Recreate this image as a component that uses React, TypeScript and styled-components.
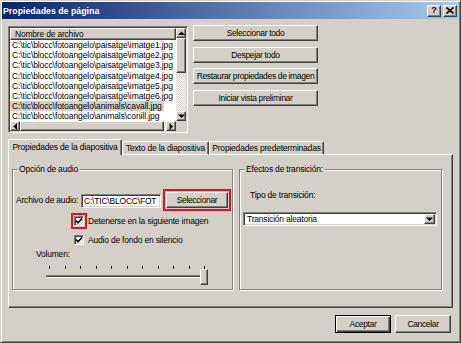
import React from "react";
import styled, { createGlobalStyle, css } from "styled-components";

const GlobalStyle = createGlobalStyle`
  html, body {
    margin: 0;
    padding: 0;
    background: #d4d0c8;
  }
  body {
    font-family: "Liberation Sans", Arial, sans-serif;
    font-size: 8.5px;
    letter-spacing: -0.2px;
    color: #000;
  }
  * {
    box-sizing: border-box;
  }
`;

const raised = css`
  border: 1px solid;
  border-color: #fff #404040 #404040 #fff;
  box-shadow: inset -1px -1px #808080;
  background: #d4d0c8;
`;

const sunken = css`
  border: 1px solid;
  border-color: #808080 #fff #fff #808080;
  box-shadow: inset 1px 1px #404040, inset -1px -1px #d4d0c8;
`;

const Window = styled.div`
  width: 461px;
  height: 343px;
  padding: 1px;
  border: 1px solid;
  border-color: #d4d0c8 #404040 #404040 #d4d0c8;
  box-shadow: inset 1px 1px #fff, inset -1px -1px #808080;
  background: #d4d0c8;
  display: flex;
  flex-direction: column;
`;

const TitleBar = styled.div`
  height: 17px;
  display: flex;
  align-items: center;
  justify-content: space-between;
  padding: 0 2px 0 1px;
  background: linear-gradient(to right, #0a246a, #a6caf0);
`;

const TitleText = styled.span`
  color: #fff;
  font-weight: bold;
  font-size: 8.8px;
  letter-spacing: 0;
`;

const CaptionButtons = styled.div`
  display: flex;
  gap: 2px;
`;

const CaptionButton = styled.div`
  ${raised}
  width: 14px;
  height: 12px;
  display: flex;
  align-items: center;
  justify-content: center;
  font-weight: bold;
  font-size: 9px;
  line-height: 1;
`;

const Body = styled.div`
  padding: 7px 6px 0 6px;
  display: flex;
  flex-direction: column;
`;

const TopRow = styled.div`
  display: flex;
  gap: 5px;
  height: 107px;
`;

const ListBox = styled.div`
  ${sunken}
  padding: 1px;
  width: 180px;
  height: 107px;
  background: #fff;
  display: grid;
  grid-template-columns: 1fr 10px;
  grid-template-rows: 1fr 10px;
  overflow: hidden;
`;

const ListContent = styled.div`
  overflow: hidden;
  display: flex;
  flex-direction: column;
`;

const ListHeader = styled.div`
  ${raised}
  height: 12px;
  flex: none;
  line-height: 10px;
  padding-left: 4px;
  white-space: nowrap;
`;

const ListRow = styled.div<{ $selected?: boolean }>`
  height: 10.2px;
  flex: none;
  line-height: 10.2px;
  padding: 0 2px;
  width: fit-content;
  white-space: nowrap;
  letter-spacing: -0.08px;
  background: ${(p) => (p.$selected ? "#d4d0c8" : "transparent")};
`;

const dither = css`
  background: repeating-conic-gradient(#fff 0 25%, #d4d0c8 0 50%) 0 0 / 2px 2px;
`;

const VScroll = styled.div`
  display: flex;
  flex-direction: column;
  ${dither}
`;

const HScroll = styled.div`
  display: flex;
  ${dither}
`;

const ScrollArrow = styled.div`
  ${raised}
  width: 10px;
  height: 10px;
  flex: none;
  display: flex;
  align-items: center;
  justify-content: center;
`;

const ScrollThumb = styled.div<{ $size: number; $horizontal?: boolean }>`
  ${raised}
  flex: none;
  ${(p) => (p.$horizontal ? `width: ${p.$size}px;` : `height: ${p.$size}px;`)}
`;

const Spacer = styled.div`
  flex: 1;
`;

const Corner = styled.div`
  background: #d4d0c8;
`;

const ButtonColumn = styled.div`
  display: flex;
  flex-direction: column;
  gap: 5.67px;
  margin-top: -1px;
`;

const Button = styled.div<{ $width?: number; $height?: number; $default?: boolean }>`
  ${raised}
  width: ${(p) => p.$width ?? 125}px;
  height: ${(p) => p.$height ?? 16}px;
  display: flex;
  align-items: center;
  justify-content: center;
  white-space: nowrap;
  letter-spacing: -0.35px;
  ${(p) =>
    p.$default &&
    css`
      border: 1px solid #000;
      box-shadow: inset 1px 1px #fff, inset -1px -1px #404040,
        inset -2px -2px #808080;
    `}
`;

const TabStrip = styled.div`
  margin-top: 6px;
  height: 16px;
  display: flex;
  align-items: flex-end;
  position: relative;
  z-index: 1;
  margin-bottom: -1px;
`;

const Tab = styled.div<{ $active?: boolean; $width: number }>`
  width: ${(p) => p.$width}px;
  height: ${(p) => (p.$active ? 16 : 14)}px;
  background: #d4d0c8;
  border-top: 1px solid #fff;
  border-left: 1px solid #fff;
  border-right: 1px solid #404040;
  border-radius: 2px 2px 0 0;
  box-shadow: inset -1px 0 #808080;
  display: flex;
  align-items: center;
  justify-content: center;
  white-space: nowrap;
  padding-bottom: ${(p) => (p.$active ? 1 : 0)}px;
  ${(p) =>
    !p.$active &&
    css`
      border-bottom: 1px solid #fff;
    `}
`;

const Panel = styled.div`
  border: 1px solid;
  border-color: #fff #404040 #404040 #fff;
  box-shadow: inset -1px -1px #808080;
  width: 445px;
  height: 154px;
  padding: 9px 0 0 3px;
  display: flex;
  gap: 6px;
`;

const Group = styled.fieldset<{ $width: number }>`
  margin: 0;
  padding: 0;
  width: ${(p) => p.$width}px;
  height: 126px;
  border: 1px solid #808080;
  box-shadow: inset 1px 1px #fff, 1px 1px #fff;
  display: flex;
  flex-direction: column;
`;

const Legend = styled.legend`
  margin-left: 4px;
  padding: 0 2px;
  line-height: 11px;
  height: 11px;
  background: #d4d0c8;
`;

const FileRow = styled.div`
  margin-top: 14px;
  height: 21px;
  display: flex;
  align-items: center;
  padding-left: 3px;
`;

const FieldLabel = styled.span<{ $width?: number }>`
  ${(p) => (p.$width ? `width: ${p.$width}px;` : "")}
  white-space: nowrap;
  flex: none;
`;

const TextField = styled.div`
  ${sunken}
  width: 80px;
  height: 14px;
  background: #fff;
  padding: 0 2px;
  line-height: 12px;
  overflow: hidden;
  white-space: nowrap;
  margin-top: 2px;
`;

const RedFrame = styled.div<{ $show?: boolean; $offset?: number }>`
  border: 2px solid ${(p) => (p.$show ? "#e0121c" : "transparent")};
  padding: 1px;
  flex: none;
  margin-left: ${(p) => p.$offset ?? 0}px;
`;

const CheckRow = styled.div`
  margin-top: 3px;
  height: 16px;
  display: flex;
  align-items: center;
  padding-left: 58px;
  gap: 1px;
`;

const CheckBox = styled.div`
  ${sunken}
  width: 10px;
  height: 10px;
  background: #fff;
  display: flex;
  align-items: center;
  justify-content: center;
`;

const VolumeLabel = styled.div`
  margin-top: 1px;
  padding-left: 23px;
  line-height: 11px;
  height: 11px;
`;

const Slider = styled.div`
  position: relative;
  margin: 2px 0 0 31px;
  width: 166px;
  height: 24px;
  padding-top: 4px;
`;

const Ticks = styled.div`
  display: flex;
  justify-content: space-between;
  width: 161px;
  padding-left: 5px;
  height: 3px;
`;

const Tick = styled.div`
  width: 1px;
  height: 3px;
  background: #000;
`;

const Track = styled.div`
  margin: 6px 0 0 2px;
  width: 162px;
  height: 3px;
  border-top: 1px solid #808080;
  border-left: 1px solid #808080;
  border-bottom: 1px solid #fff;
  border-right: 1px solid #fff;
  background: #404040;
`;

const Thumb = styled.div`
  ${raised}
  position: absolute;
  left: 156px;
  top: 7px;
  width: 8px;
  height: 16px;
`;

const TypeLabel = styled.div`
  margin-top: 15px;
  padding-left: 10px;
  line-height: 11px;
  height: 11px;
`;

const Combo = styled.div`
  ${sunken}
  margin: 11px 0 0 3px;
  width: 194px;
  height: 14px;
  background: #fff;
  padding: 1px;
  display: flex;
  align-items: center;
  justify-content: space-between;
`;

const ComboText = styled.span`
  padding-left: 2px;
  white-space: nowrap;
`;

const ComboButton = styled.div`
  ${raised}
  width: 11px;
  height: 10px;
  display: flex;
  align-items: center;
  justify-content: center;
`;

const Footer = styled.div`
  margin-top: 7px;
  display: flex;
  justify-content: flex-end;
  gap: 4px;
  padding-right: 2px;
`;

const Arrow = ({ dir }: { dir: "up" | "down" | "left" | "right" }) => {
  const pts = {
    up: "0,4 3.5,0.5 7,4",
    down: "0,0.5 7,0.5 3.5,4",
    left: "4,0 0.5,3.5 4,7",
    right: "0.5,0 4,3.5 0.5,7",
  }[dir];
  const vertical = dir === "up" || dir === "down";
  return (
    <svg width={vertical ? 7 : 5} height={vertical ? 5 : 7} viewBox={vertical ? "0 0 7 5" : "0 0 5 7"}>
      <polygon points={pts} fill="#000" />
    </svg>
  );
};

const CheckMark = () => (
  <svg width="8" height="8" viewBox="0 0 8 8">
    <polyline points="1,3.5 3,5.8 7,1.5" fill="none" stroke="#000" strokeWidth="1.6" />
  </svg>
);

const files = [
  "C:\\tic\\blocc\\fotoangelo\\paisatge\\imatge1.jpg",
  "C:\\tic\\blocc\\fotoangelo\\paisatge\\imatge2.jpg",
  "C:\\tic\\blocc\\fotoangelo\\paisatge\\imatge3.jpg",
  "C:\\tic\\blocc\\fotoangelo\\paisatge\\imatge4.jpg",
  "C:\\tic\\blocc\\fotoangelo\\paisatge\\imatge5.jpg",
  "C:\\tic\\blocc\\fotoangelo\\paisatge\\imatge6.jpg",
  "C:\\tic\\blocc\\fotoangelo\\animals\\cavall.jpg",
  "C:\\tic\\blocc\\fotoangelo\\animals\\conill.jpg",
];

const App = () => {
  return (
    <>
      <GlobalStyle />
      <Window>
        <TitleBar>
          <TitleText>Propiedades de página</TitleText>
          <CaptionButtons>
            <CaptionButton>?</CaptionButton>
            <CaptionButton>
              <svg width="8" height="7" viewBox="0 0 8 7">
                <path d="M0.5 0.5 L7.5 6.5 M7.5 0.5 L0.5 6.5" stroke="#000" strokeWidth="1.6" />
              </svg>
            </CaptionButton>
          </CaptionButtons>
        </TitleBar>
        <Body>
          <TopRow>
            <ListBox>
              <ListContent>
                <ListHeader>Nombre de archivo</ListHeader>
                {files.map((f, i) => (
                  <ListRow key={i} $selected={i === 6}>
                    {f}
                  </ListRow>
                ))}
              </ListContent>
              <VScroll>
                <ScrollArrow>
                  <Arrow dir="up" />
                </ScrollArrow>
                <ScrollThumb $size={35} />
                <Spacer />
                <ScrollArrow>
                  <Arrow dir="down" />
                </ScrollArrow>
              </VScroll>
              <HScroll>
                <ScrollArrow>
                  <Arrow dir="left" />
                </ScrollArrow>
                <ScrollThumb $size={144} $horizontal />
                <Spacer />
                <ScrollArrow>
                  <Arrow dir="right" />
                </ScrollArrow>
              </HScroll>
              <Corner />
            </ListBox>
            <ButtonColumn>
              <Button>Seleccionar todo</Button>
              <Button>Despejar todo</Button>
              <Button>Restaurar propiedades de imagen</Button>
              <Button>Iniciar vista preliminar</Button>
            </ButtonColumn>
          </TopRow>

          <TabStrip>
            <Tab $active $width={114}>
              Propiedades de la diapositiva
            </Tab>
            <Tab $width={87}>Texto de la diapositiva</Tab>
            <Tab $width={115}>Propiedades predeterminadas</Tab>
          </TabStrip>
          <Panel>
            <Group $width={221}>
              <Legend>Opción de audio</Legend>
              <FileRow>
                <FieldLabel $width={65}>Archivo de audio:</FieldLabel>
                <TextField>C:\TIC\BLOCC\FOT</TextField>
                <RedFrame $show $offset={2}>
                  <Button $width={62} $height={16}>
                    Seleccionar
                  </Button>
                </RedFrame>
              </FileRow>
              <CheckRow>
                <RedFrame $show>
                  <CheckBox>
                    <CheckMark />
                  </CheckBox>
                </RedFrame>
                <FieldLabel>Detenerse en la siguiente imagen</FieldLabel>
              </CheckRow>
              <CheckRow>
                <RedFrame>
                  <CheckBox>
                    <CheckMark />
                  </CheckBox>
                </RedFrame>
                <FieldLabel>Audio de fondo en silencio</FieldLabel>
              </CheckRow>
              <VolumeLabel>Volumen:</VolumeLabel>
              <Slider>
                <Ticks>
                  {Array.from({ length: 11 }).map((_, i) => (
                    <Tick key={i} />
                  ))}
                </Ticks>
                <Track />
                <Thumb />
              </Slider>
            </Group>
            <Group $width={203}>
              <Legend>Efectos de transición:</Legend>
              <TypeLabel>Tipo de transición:</TypeLabel>
              <Combo>
                <ComboText>Transición aleatoria</ComboText>
                <ComboButton>
                  <Arrow dir="down" />
                </ComboButton>
              </Combo>
            </Group>
          </Panel>

          <Footer>
            <Button $width={56} $height={18} $default>
              Aceptar
            </Button>
            <Button $width={56} $height={18}>
              Cancelar
            </Button>
          </Footer>
        </Body>
      </Window>
    </>
  );
};

export default App;
